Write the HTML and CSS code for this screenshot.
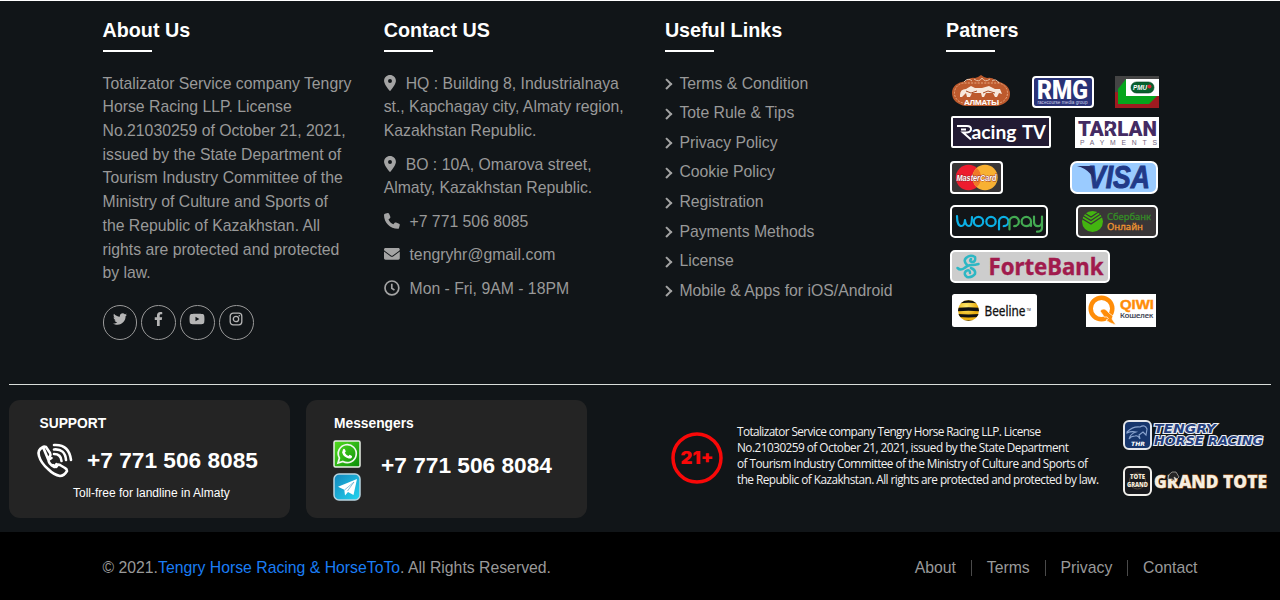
FILE: index.html
```html
<!DOCTYPE html>
<html lang="en">
<head>
<meta charset="utf-8">
<title>Tengry Horse Racing</title>
<link rel="stylesheet" href="styles.css">
</head>
<body>
<footer class="footer">
  <div class="columns">
    <section class="col">
      <h2 class="title">About Us</h2>
      <p class="about">Totalizator Service company Tengry<br>Horse Racing LLP. License<br>No.21030259 of October 21, 2021,<br>issued by the State Department of<br>Tourism Industry Committee of the<br>Ministry of Culture and Sports of<br>the Republic of Kazakhstan. All<br>rights are protected and protected<br>by law.</p>
      <div class="social">
        <a class="circle"><svg width="14" height="14" viewBox="0 0 512 512"><path d="M459.37 151.716c.325 4.548.325 9.097.325 13.645 0 138.72-105.583 298.558-298.558 298.558-59.452 0-114.68-17.219-161.137-47.106 8.447.974 16.568 1.299 25.34 1.299 49.055 0 94.213-16.568 130.274-44.832-46.132-.975-84.792-31.188-98.112-72.772 6.498.974 12.995 1.624 19.818 1.624 9.421 0 18.843-1.3 27.614-3.573-48.081-9.747-84.143-51.98-84.143-102.985v-1.299c13.969 7.797 30.214 12.67 47.431 13.319-28.264-18.843-46.781-51.005-46.781-87.391 0-19.492 5.197-37.36 14.294-52.954 51.655 63.675 129.3 105.258 216.365 109.807-1.624-7.797-2.599-15.918-2.599-24.04 0-57.828 46.782-104.934 104.934-104.934 30.213 0 57.502 12.67 76.67 33.137 23.715-4.548 46.456-13.32 66.599-25.34-7.798 24.366-24.366 44.833-46.132 57.827 21.117-2.273 41.584-8.122 60.426-16.243-14.292 20.791-32.161 39.308-52.628 54.253z"/></svg></a>
        <a class="circle"><svg width="9" height="14" viewBox="0 0 320 512"><path d="M279.14 288l14.22-92.66h-88.91v-60.13c0-25.35 12.42-50.06 52.24-50.06h40.42V6.26S260.43 0 225.36 0c-73.22 0-121.08 44.38-121.08 124.72v70.62H22.89V288h81.39v224h100.17V288z"/></svg></a>
        <a class="circle"><svg width="16" height="14" viewBox="0 0 576 512"><path d="M549.655 124.083c-6.281-23.65-24.787-42.276-48.284-48.597C458.781 64 288 64 288 64S117.22 64 74.629 75.486c-23.497 6.322-42.003 24.947-48.284 48.597-11.412 42.867-11.412 132.305-11.412 132.305s0 89.438 11.412 132.305c6.281 23.65 24.787 41.5 48.284 47.821C117.22 448 288 448 288 448s170.78 0 213.371-11.486c23.497-6.321 42.003-24.171 48.284-47.821 11.412-42.867 11.412-132.305 11.412-132.305s0-89.438-11.412-132.305zm-317.51 213.508V175.185l142.739 81.205-142.739 81.201z"/></svg></a>
        <a class="circle"><svg width="14" height="14" viewBox="0 0 14 14"><rect class="line" x="1.2" y="1.2" width="11.6" height="11.6" rx="3" stroke-width="1.3"/><circle class="line" cx="7" cy="7" r="2.7" stroke-width="1.3"/><circle cx="10.3" cy="3.7" r=".8"/></svg></a>
      </div>
    </section>

    <section class="col">
      <h2 class="title">Contact US</h2>
      <ul class="contacts">
        <li><svg class="pin" viewBox="0 0 384 512"><path d="M215.7 499.2C267 435 384 279.4 384 192C384 86 298 0 192 0S0 86 0 192c0 87.4 117 243 168.3 307.2c12.3 15.3 35.1 15.3 47.4 0zM192 128a64 64 0 1 1 0 128 64 64 0 1 1 0-128z"/></svg>HQ : Building 8, Industrialnaya<br>st., Kapchagay city, Almaty region,<br>Kazakhstan Republic.</li>
        <li><svg class="pin" viewBox="0 0 384 512"><path d="M215.7 499.2C267 435 384 279.4 384 192C384 86 298 0 192 0S0 86 0 192c0 87.4 117 243 168.3 307.2c12.3 15.3 35.1 15.3 47.4 0zM192 128a64 64 0 1 1 0 128 64 64 0 1 1 0-128z"/></svg>BO : 10A, Omarova street,<br>Almaty, Kazakhstan Republic.</li>
        <li><svg class="glyph" viewBox="0 0 512 512"><path d="M164.9 24.6c-7.7-18.6-28-28.5-47.4-23.2l-88 24C12.1 30.2 0 46 0 64C0 311.4 200.6 512 448 512c18 0 33.8-12.1 38.6-29.5l24-88c5.3-19.4-4.6-39.7-23.2-47.4l-96-40c-16.3-6.8-35.2-2.1-46.3 11.6L304.7 368C234.3 334.7 177.3 277.7 144 207.3L193.3 167c13.7-11.2 18.4-30 11.6-46.3l-40-96z"/></svg>+7 771 506 8085</li>
        <li><svg class="glyph" viewBox="0 0 512 512"><path d="M48 64C21.500 64 0 85.500 0 112c0 15.100 7.100 29.300 19.200 38.400L236.800 313.600c11.400 8.500 27 8.500 38.400 0L492.800 150.400c12.100-9.100 19.200-23.300 19.200-38.400c0-26.500-21.500-48-48-48H48zM0 176V400c0 26 22 48 48 48H464c26 0 48-22 48-48V176L294.400 339.200c-22.800 17.100-54 17.100-76.800 0L0 176z"/></svg>tengryhr@gmail.com</li>
        <li><svg class="glyph" viewBox="0 0 16 16"><circle class="line" cx="8" cy="8" r="7" stroke-width="1.7"/><path class="line" d="M7.900 3.700v4.600l2.700 1.900" stroke-width="1.7"/></svg>Mon - Fri, 9AM - 18PM</li>
      </ul>
    </section>

    <section class="col">
      <h2 class="title">Useful Links</h2>
      <ul class="links">
        <li>Terms &amp; Condition</li>
        <li>Tote Rule &amp; Tips</li>
        <li>Privacy Policy</li>
        <li>Cookie Policy</li>
        <li>Registration</li>
        <li>Payments Methods</li>
        <li>License</li>
        <li>Mobile &amp; Apps for iOS/Android</li>
      </ul>
    </section>

    <section class="col">
      <h2 class="title">Patners</h2>
      <div class="partners">
        <div class="row inset-a">
          <svg width="58" height="33" viewBox="0 0 58 33">
            <path d="M15 5q4-3 8-2l3-1 3-2 3 2 3 1q5-1 8 2l1 1q14 3 14 13 0 9-13 12H13Q0 28 0 18 0 8 14 6z" fill="#bd5a2d"/>
            <rect x="2.500" y="8" width="53" height="20" rx="10" fill="none" stroke="#e8a67f" stroke-dasharray="2 1.300"/>
            <path d="M12 7q4-5 8-1m2-2q5 4 8-1 3 5 8 1m2 2q4-3 7 2" fill="none" stroke="#e8c0a5"/>
            <path d="M8 20q0-6 6-6l5-3 4 2h7l7-2 6 3 5 0 2 5-3-1-2 4h-2l-2-4-7 0-2 4h-2l-1-4H20l-2 4h-3l-1-4-4 4H8z" fill="#f7e8dc"/>
            <path d="M14 16l5 2 6-2m6 2 5-2 7 2" fill="none" stroke="#a84a22"/>
            <text x="12" y="30" class="sans b" font-size="8" fill="#fff" textLength="35">АЛМАТЫ</text>
          </svg>
          <svg class="rmg" width="62" height="32" viewBox="0 0 62 32">
            <rect x="1" y="1" width="60" height="30" rx="3" fill="#293276" stroke="#fff" stroke-width="2"/>
            <text x="5" y="22.500" class="roboto" font-size="25" font-weight="900" fill="#fff" textLength="51" lengthAdjust="spacingAndGlyphs">RMG</text>
            <text x="5.500" y="28" class="sans" font-size="4.800" fill="#c9cde6" textLength="50" lengthAdjust="spacingAndGlyphs">racecourse media group</text>
          </svg>
          <svg width="44" height="32" viewBox="0 0 44 32">
            <path d="M0 0H44V32H0z" fill="#444"/><path d="M0 16L44 20V32H0z" fill="#9e1b20"/>
            <path d="M11 3H44V20H11z" fill="#fff"/><path d="M3 13L11 3V20H42L34 28H3z" fill="#05a51c"/>
            <rect x="16" y="6" width="23" height="11" rx="5.500" fill="#07602d" stroke="#08421f" stroke-width=".6"/>
            <text x="18" y="14" class="sans b i" font-size="6.500" fill="#fff" textLength="14" lengthAdjust="spacingAndGlyphs">PMU</text><circle cx="34.500" cy="10.500" r="2" fill="#d92332"/>
          </svg>
        </div>
        <div class="row inset-b">
          <svg width="100" height="32" viewBox="0 0 100 32">
            <rect x="1" y="1" width="98" height="30" rx="1" fill="#221b33" stroke="#fff" stroke-width="2"/>
            <path d="M6 10H16q4 0 4 3t-4 3.500H12l8 7M10 13.500h5" fill="none" stroke="#fff" stroke-width="2"/>
            <text x="20.500" y="22.500" class="lato" font-size="18.500" font-weight="700" fill="#fff" textLength="45" lengthAdjust="spacingAndGlyphs">acing</text>
            <text x="71" y="22.500" class="lato" font-size="18.500" font-weight="700" fill="#fff" textLength="24" lengthAdjust="spacingAndGlyphs">TV</text>
          </svg>
          <svg width="84" height="31" viewBox="0 0 84 31">
            <path d="M0 0H84V31H0z" fill="#fff"/>
            <text x="3" y="18.500" class="roboto" font-size="21" font-weight="900" fill="#442b63" textLength="79" lengthAdjust="spacingAndGlyphs">TARLAN</text>
            <path d="M30 13l3-4 2 2-2 3zM34 4l4-3-1 4z" fill="#fff"/>
            <text x="5" y="27.500" class="sans" font-size="6.800" fill="#736580" textLength="77">PAYMENTS</text>
          </svg>
        </div>
        <div class="row inset-c">
          <svg width="53" height="33" viewBox="0 0 53 33">
            <rect x="1" y="1" width="51" height="31" rx="3" fill="#393637" stroke="#fff" stroke-width="2"/>
            <circle cx="18.500" cy="16.500" r="12.700" fill="#ed1c2e"/><circle cx="35" cy="16.500" r="12.700" fill="#f8b133"/>
            <path d="M26.800 7a12.700 12.700 0 0 1 0 19a12.700 12.700 0 0 1 0-19z" fill="#ef7928"/>
            <text x="6.500" y="19.500" class="sans b i outline-dark" font-size="8.500" fill="#fff" textLength="40" lengthAdjust="spacingAndGlyphs">MasterCard</text>
          </svg>
          <svg width="88" height="33" viewBox="0 0 88 33">
            <rect x="1" y="1" width="86" height="31" rx="6" fill="#9acbff" stroke="#fff" stroke-width="2"/>
            <text x="18" y="27" class="sans b i" font-size="31" fill="#213a88" stroke="#213a88" textLength="62" lengthAdjust="spacingAndGlyphs">VISA</text>
            <path d="M7 5h13q3 0 3.500 4l1 10-4-6q-5-6-13.500-8z" fill="#252d68"/>
          </svg>
        </div>
        <div class="row inset-c">
          <svg width="98" height="33" viewBox="0 0 98 33">
            <rect x="1" y="1" width="96" height="31" rx="4" fill="#121518" stroke="#fff" stroke-width="2"/>
            <g fill="none" stroke-width="2.200" stroke-linecap="round" stroke-linejoin="round" transform="translate(0 -1)">
              <path d="M7 12q0 10 4.500 10 3 0 3.500-6 .5 6 4 6 3 0 3-9" stroke="#0bb0e6"/><circle cx="28.500" cy="17.500" r="4.700" stroke="#0bb0e6"/><circle cx="41" cy="17.500" r="4.700" stroke="#0bb0e6"/>
              <path d="M49 25.500V17.500a4.700 4.700 0 1 1 4.700 4.700" stroke="#0bb0e6"/>
              <path d="M60.500 25.500V17.500a4.700 4.700 0 1 1 4.700 4.700M82 22v-4.500a4.700 4.700 0 1 0-4.700 4.700q3 0 4.700-3M85 12.500v5q0 4.700 4 4.700 3 0 4-4m0-5.500v11q0 4-5 4" stroke="#43aa52" transform="translate(-1 0)"/>
            </g>
          </svg>
          <svg width="82" height="33" viewBox="0 0 82 33">
            <rect x="1" y="1" width="80" height="31" rx="4" fill="#393637" stroke="#fff" stroke-width="2"/>
            <circle cx="16.500" cy="16.500" r="10.500" fill="#43b510"/>
            <path d="M5 6l10 6 12-8M5 9.500l10 6 12-8M5 13l10 6 12-8" fill="none" stroke="#393637" stroke-width="1.200"/>
            <text x="31" y="15" class="noto" font-size="9" fill="#348d26" stroke="#348d26" stroke-width=".3" textLength="44" lengthAdjust="spacingAndGlyphs">Сбербанк</text>
            <text x="31" y="25" class="noto" font-size="9" fill="#ee9430" stroke="#ee9430" stroke-width=".3" textLength="36" lengthAdjust="spacingAndGlyphs">Онлайн</text>
          </svg>
        </div>
        <div class="row inset-c">
          <svg width="160" height="33" viewBox="0 0 160 33">
            <rect x="1" y="1" width="158" height="31" rx="4" fill="#cdcdcd" stroke="#fff" stroke-width="2"/>
            <g fill="none" stroke="#2db7c4" stroke-width="2.500" stroke-linecap="round"><path d="M7.500 18q3 3 7 0 3-3 7-3t7-1"/><path d="M17 15q-4-4-1-7 4-4 9-1 1 5-3 5-3-1-1-3"/><path d="M21 18q5 2 4 6-3 4-8 3-4-3-1-6 4-2 4 2"/></g>
            <text x="38.500" y="25" class="noto" font-size="23" font-weight="700" fill="#a11b4d" stroke="#a11b4d" stroke-width=".4" textLength="115" lengthAdjust="spacingAndGlyphs">ForteBank</text>
          </svg>
        </div>
        <div class="row inset-d">
          <svg width="85" height="33" viewBox="0 0 85 33">
            <rect width="85" height="33" rx="2.500" fill="#fff"/>
            <defs><radialGradient id="ball" cx=".4" cy=".3"><stop offset="0" stop-color="#ffec70"/><stop offset="1" stop-color="#e9ae10"/></radialGradient><clipPath id="round"><circle cx="16.500" cy="16.500" r="10.500"/></clipPath></defs>
            <circle cx="16.500" cy="16.500" r="10.500" fill="url(#ball)"/>
            <g clip-path="url(#round)" fill="none" stroke="#111"><path d="M5 8.500q11.500-2 23 0" stroke-width="2.500"/><path d="M5 15.500q11.500-1 23 0" stroke-width="3.500"/><path d="M5 21.500q11.500 1 23 0M5 27q11 2 23 0" stroke-width="3"/></g>
            <text x="32.500" y="22" class="noto" font-size="13.500" fill="#111" stroke="#111" stroke-width=".3" textLength="41" lengthAdjust="spacingAndGlyphs">Beeline</text><text x="74.500" y="17" class="sans" font-size="3" fill="#111">TM</text>
          </svg>
          <svg width="70" height="33" viewBox="0 0 70 33">
            <path d="M0 0H70V33H0z" fill="#fff"/>
            <circle cx="15.500" cy="14.500" r="10.800" fill="none" stroke="#ff8d08" stroke-width="4.500"/>
            <path d="M14 17q4-5 9 2l4 3-1 3 4 6q-7-2-10-5 4-1 1-3-4 1-4-2z" fill="#ff8d08" stroke="#fff" stroke-width=".7"/>
            <text x="34" y="15" class="sans b" font-size="13.500" fill="#ff8d08" stroke="#ff8d08" stroke-width=".4" textLength="34" lengthAdjust="spacingAndGlyphs">QIWI</text>
            <text x="34" y="24" class="noto" font-size="7.500" fill="#303548" stroke="#303548" stroke-width=".2" textLength="33" lengthAdjust="spacingAndGlyphs">Кошелек</text>
          </svg>
        </div>
      </div>
    </section>
  </div>

  <div class="bar">
    <div class="card">
      <div class="card-title">SUPPORT</div>
      <div class="support">
        <svg width="36" height="35" viewBox="0 0 36 35"><g fill="none" stroke="#fff" stroke-width="2.600" stroke-linecap="round" stroke-linejoin="round"><path d="M6 4Q0 7 2 13q2 7 9 13 6 6 12 7 4 0 7-5 0-2-2-3l-5-3q-2-1-3 1l-1 1-3-2m-5-6 2-3q1-1 0-3L9 4Q7 3 6 4z"/><path d="M17 2q15-1 17 15M17 6.500q11-1 12 10.500M17 11q7 0 7.500 7M14.500 15l-3 2q0 4 6 7l2-3"/></g></svg>
        <span class="phone">+7 771 506 8085</span>
      </div>
      <div class="note">Toll-free for landline in Almaty</div>
    </div>
    <div class="card second">
      <div class="card-title">Messengers</div>
      <div class="messengers">
        <div class="apps">
          <svg width="28" height="28" viewBox="0 0 28 28"><defs><linearGradient id="wa" x2="1" y2="1"><stop stop-color="#55dc20"/><stop offset="1" stop-color="#078d08"/></linearGradient></defs><rect x="1" y="1" width="26" height="26" rx="1.500" fill="url(#wa)" stroke="#e7eee5" stroke-width="1.500"/><path d="M5 23l1.400-5a9 9 0 1 1 3.500 3.500z" fill="none" stroke="#f1f7ee" stroke-width="1.700"/><path d="M10 9.500q1-1.500 2 0l.8 2-1 1.200q1.200 2.300 3.600 3.300l1.200-1.300 2.400 1.200q.2 3-3.300 2.600-5.400-1.500-6.600-6z" fill="#fff"/></svg>
          <svg width="28" height="28" viewBox="0 0 28 28"><defs><linearGradient id="tg" x2="1" y2="1"><stop stop-color="#1386bd"/><stop offset="1" stop-color="#24d5ef"/></linearGradient></defs><rect x="1" y="1" width="26" height="26" rx="5" fill="url(#tg)" stroke="#b9d5e1" stroke-width="1.500"/><path d="M5 13.800L24 6l-3.500 16-5.500-3-3 3.500-.7-5.800z" fill="#fff"/><path d="M11.500 17L21 9l-6.500 9" fill="none" stroke="#54a9cc" stroke-width=".7"/></svg>
        </div>
        <span class="phone">+7 771 506 8084</span>
      </div>
    </div>
    <div class="legal">
      <svg width="52" height="52" viewBox="0 0 52 52"><circle cx="26" cy="26" r="24" fill="none" stroke="#f90808" stroke-width="3.500"/><text x="9.500" y="32" class="black" font-size="17" fill="#f90808" textLength="33" lengthAdjust="spacingAndGlyphs">21+</text></svg>
      <svg class="statement" width="364" height="66" viewBox="0 0 364 66">
        <text x="0" y="12" textLength="304">Totalizator Service company Tengry Horse Racing LLP. License</text>
        <text x="0" y="28" textLength="332">No.21030259 of October 21, 2021, issued by the State Department</text>
        <text x="0" y="43.500" textLength="351">of Tourism Industry Committee of the Ministry of Culture and Sports of</text>
        <text x="0" y="59.500" textLength="362">the Republic of Kazakhstan. All rights are protected and protected by law.</text>
      </svg>
      <div class="brands">
        <svg width="145" height="31" viewBox="0 0 145 31">
          <rect x="1" y="1" width="27" height="28" rx="5" fill="#17366d" stroke="#e5e7eb" stroke-width="2"/>
          <path d="M4 12q6-6 13-5 5-3 7 2l-1 6-3-3-4 3 1 4q-2-4-5-3-4 0-6 3 1-5 7-7-5-1-9 1z" fill="none" stroke="#8aa4cf" stroke-width="1.100"/>
          <text x="8" y="25.500" class="wide" font-size="6" fill="#fff" textLength="14" lengthAdjust="spacingAndGlyphs">THR</text>
          <g class="wide outlined" font-size="11.500"><text x="31" y="13" textLength="62" lengthAdjust="spacingAndGlyphs">TENGRY</text><text x="31" y="24.500" textLength="109" lengthAdjust="spacingAndGlyphs">HORSE RACING</text></g>
        </svg>
        <svg width="145" height="31" viewBox="0 0 145 31">
          <rect x="1" y="1" width="27" height="28" rx="5" fill="#18191d" stroke="#f2f0ec" stroke-width="2"/>
          <circle cx="14.500" cy="15" r="8" fill="none" stroke="#534638"/>
          <g class="open" font-size="6.300" font-weight="800" fill="#f5e9d7"><text x="7" y="13" textLength="15" lengthAdjust="spacingAndGlyphs">TOTE</text><text x="4" y="21" textLength="21" lengthAdjust="spacingAndGlyphs">GRAND</text></g>
          <text x="31" y="21.500" class="open gilded" font-size="17" font-weight="800" textLength="113" lengthAdjust="spacingAndGlyphs">GRAND TOTE</text>
          <path d="M45 13q0-5 4-7l4 0 3 5-2 2-3-2 1 4-3-2z" fill="#252525" stroke="#d5d0c8" stroke-width=".6"/>
        </svg>
      </div>
    </div>
  </div>

  <div class="bottom">
    <div class="copyright">© 2021.<a>Tengry Horse Racing &amp; HorseToTo</a>. All Rights Reserved.</div>
    <nav class="nav"><a>About</a><a>Terms</a><a>Privacy</a><a>Contact</a></nav>
  </div>
</footer>
</body>
</html>
```
FILE: styles.css
```css
* { box-sizing: border-box; }
body { margin: 0; background: #111518; font-family: "Liberation Sans", Arial, sans-serif; font-size: 15.79px; line-height: 23.68px; color: #999; }
svg { display: block; flex: none; overflow: visible; }
ul { list-style: none; margin: 0; padding: 0; }
.footer { height: 600px; display: flex; flex-direction: column; border-top: 1px solid #fff; overflow: hidden; }
.columns { display: grid; grid-template-columns: repeat(4, 281.2px); padding: 17px 0 0 102.500px; height: 382.5px; flex: none; }
.title { margin: 0 0 20px; font-size: 19.73px; line-height: 24px; color: #fff; }
.title::after { content: ""; display: block; width: 49.3px; height: 2px; margin-top: 8px; background: #fff; }
.about { margin: 0 0 20px; white-space: nowrap; }
.contacts, .links, .about { position: relative; top: -.300px; }
.social { display: flex; gap: 4px; }
.circle { width: 34.8px; height: 34.8px; display: flex; justify-content: center; padding-top: 6px; border: 1px solid #999; border-radius: 50%; }
.circle svg { fill: #b5b5b5; }
.line { fill: none; stroke: #a4a4a4; }
.circle .line { stroke: #b5b5b5; }
.contacts { white-space: nowrap; }
.contacts li { margin-bottom: 9.8px; }
.contacts svg { display: inline-block; height: 15.8px; fill: #a4a4a4; vertical-align: -2px; }
.pin { width: 12px; margin-right: 10px; }
.glyph { width: 15.8px; margin-right: 10px; }
.links li { display: flex; align-items: center; margin-bottom: 5.91px; white-space: nowrap; }
.links li::before { content: ""; box-sizing: border-box; width: 7.500px; height: 7.500px; margin: 1px 9px 0 -2px; border: solid #a4a4a4; border-width: 2.500px 2.500px 0 0; transform: rotate(45deg); }
.partners { display: flex; flex-direction: column; gap: 11.600px; padding: 3px 0 0 4px; width: 213px; }
.row { height: 33px; display: flex; align-items: center; justify-content: space-between; }
.inset-a { padding-left: 2px; }
.inset-b { padding-left: 1px; margin: -4px 0 .500px; }
.inset-c { padding-right: 1px; }
.inset-d { padding: 0 3px 0 2px; }
.sans { font-family: "Liberation Sans", sans-serif; }
.roboto { font-family: Roboto, sans-serif; }
.lato { font-family: Lato, sans-serif; }
.open { font-family: "Open Sans", sans-serif; }
.noto { font-family: "Noto Sans", sans-serif; }
.black { font-family: Inter, sans-serif; font-weight: 900; }
.b { font-weight: 700; }
.i { font-style: italic; }
.wide { font-family: "DejaVu Sans", sans-serif; font-weight: 700; font-style: italic; }
.outlined { fill: #253e7c; stroke: #eef0f5; stroke-width: 2px; paint-order: stroke; }
.outline-dark { stroke: #8e2425; stroke-width: .8px; paint-order: stroke; }
.gilded { fill: #f6eee0; stroke: #b56b27; stroke-width: .8px; paint-order: stroke; }
.bar { flex: none; height: 148px; margin: 0 9px; padding-top: 15px; display: flex; border-top: 1px solid #d9ddda; }
.card { width: 281px; height: 118px; padding: 15px 0 0 28px; border-radius: 11px; background: #242424; color: #fff; }
.second { margin-left: 16px; padding-left: 27px; }
.card-title { padding-left: 2.500px; font-size: 13.8px; line-height: 18px; font-weight: 700; }
.second .card-title { padding-left: 1px; }
.support { display: flex; align-items: center; gap: 14px; height: 56px; }
.phone { font-size: 22.7px; font-weight: 700; white-space: nowrap; }
.note { padding-left: 36px; font-size: 12px; line-height: 9px; }
.messengers { display: flex; gap: 20px; padding-top: 7px; }
.apps { display: flex; flex-direction: column; gap: 5px; }
.messengers .phone { margin-top: 14px; }
.legal { display: flex; margin-left: 84px; padding-top: 17px; }
.legal > svg:first-child { margin-top: 15px; }
.statement { margin: 7px 0 0 14px; font-family: "Open Sans", sans-serif; font-size: 11.8px; fill: #f1f1f1; }
.brands { display: flex; flex-direction: column; gap: 15px; margin: 3px 0 0 22px; }
.bottom { flex: 1; display: flex; align-items: center; justify-content: space-between; padding: 4px 82.500px 0 102.500px; background: #000; }
.copyright a { color: #1a7df5; }
.nav { display: flex; align-items: center; }
.nav a { line-height: 16px; }
.nav a + a { margin-left: 14.800px; padding-left: 15px; border-left: 1px solid #4a4a4a; }
```
